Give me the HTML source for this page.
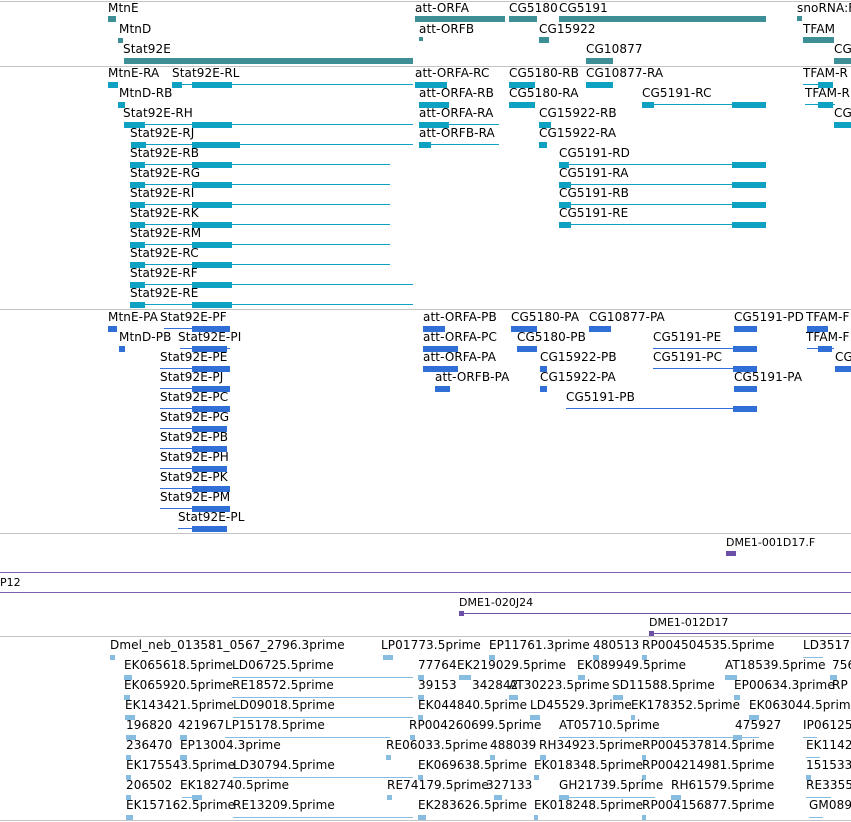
<!DOCTYPE html>
<html><head><meta charset="utf-8"><style>
body{margin:0;width:851px;height:822px;background:#fff;position:relative;overflow:hidden}
div{position:absolute}
.t{font:12px "DejaVu Sans","Liberation Sans",sans-serif;letter-spacing:0.1px;line-height:13px;white-space:nowrap;color:#000}
.h{left:0;width:851px;height:1px;background:#c4c4c4}
.p{left:0;width:851px;height:1px;background:#7a62b0}
.g{background:#3d8f95;height:6px}
.r{background:#0ea1c2;height:6px}
.rl{background:#0ea1c2;height:1px}
.q{background:#2f6fd6;height:6px}
.ql{background:#2f6fd6;height:1px}
.e{background:#86bde0;height:5px}
.el{background:#86bde0;height:1px}
.v{background:#6c4fa6;height:5px}
.vl{background:#6c4fa6;height:1px}
.s{font-size:11px;letter-spacing:0px}
</style></head><body>
<div class="h" style="top:1px"></div>
<div class="h" style="top:66px"></div>
<div class="h" style="top:309px"></div>
<div class="h" style="top:533px"></div>
<div class="p" style="top:572px"></div>
<div class="p" style="top:592px"></div>
<div class="h" style="top:636px"></div>
<div class="h" style="top:820px"></div>

<!-- genes -->
<div class="t" style="left:108px;top:2px">MtnE</div><div class="g" style="left:108px;top:16px;width:8px"></div>
<div class="t" style="left:119px;top:23px">MtnD</div><div class="g" style="left:118px;top:38px;width:5px;height:5px"></div>
<div class="t" style="left:123px;top:43px">Stat92E</div><div class="g" style="left:124px;top:58px;width:289px"></div>
<div class="t" style="left:415px;top:2px">att-ORFA</div><div class="g" style="left:415px;top:16px;width:90px"></div>
<div class="t" style="left:509px;top:2px">CG5180</div><div class="g" style="left:509px;top:16px;width:28px"></div>
<div class="t" style="left:559px;top:2px">CG5191</div><div class="g" style="left:559px;top:16px;width:207px"></div>
<div class="t" style="left:797px;top:2px">snoRNA:F</div><div class="g" style="left:797px;top:16px;width:5px;height:5px"></div>
<div class="t" style="left:419px;top:23px">att-ORFB</div><div class="g" style="left:419px;top:37px;width:4px;height:4px"></div>
<div class="t" style="left:539px;top:23px">CG15922</div><div class="g" style="left:539px;top:37px;width:10px"></div>
<div class="t" style="left:803px;top:23px">TFAM</div><div class="g" style="left:803px;top:37px;width:31px"></div>
<div class="t" style="left:586px;top:43px">CG10877</div><div class="g" style="left:586px;top:58px;width:27px"></div>
<div class="t" style="left:834px;top:43px">CG</div><div class="g" style="left:834px;top:58px;width:17px"></div>

<!-- transcripts -->
<div class="t" style="left:108px;top:67px">MtnE-RA</div><div class="r" style="left:108px;top:82px;width:10px"></div>
<div class="t" style="left:172px;top:67px">Stat92E-RL</div><div class="rl" style="left:172px;top:84px;width:241px"></div><div class="r" style="left:172px;top:82px;width:10px"></div><div class="r" style="left:192px;top:82px;width:40px"></div>
<div class="t" style="left:415px;top:67px">att-ORFA-RC</div><div class="r" style="left:415px;top:82px;width:32px"></div>
<div class="t" style="left:509px;top:67px">CG5180-RB</div><div class="r" style="left:509px;top:82px;width:26px"></div>
<div class="t" style="left:586px;top:67px">CG10877-RA</div><div class="r" style="left:586px;top:82px;width:27px"></div>
<div class="t" style="left:803px;top:67px">TFAM-R</div><div class="rl" style="left:803px;top:84px;width:30px"></div><div class="r" style="left:818px;top:82px;width:15px"></div>

<div class="t" style="left:119px;top:87px">MtnD-RB</div><div class="r" style="left:118px;top:102px;width:7px"></div>
<div class="t" style="left:419px;top:87px">att-ORFA-RB</div><div class="r" style="left:419px;top:102px;width:30px"></div>
<div class="t" style="left:509px;top:87px">CG5180-RA</div><div class="r" style="left:509px;top:102px;width:26px"></div>
<div class="t" style="left:642px;top:87px">CG5191-RC</div><div class="rl" style="left:642px;top:104px;width:124px"></div><div class="r" style="left:642px;top:102px;width:12px"></div><div class="r" style="left:732px;top:102px;width:34px"></div>
<div class="t" style="left:805px;top:87px">TFAM-R</div><div class="rl" style="left:805px;top:104px;width:30px"></div><div class="r" style="left:818px;top:102px;width:15px"></div>

<div class="t" style="left:123px;top:107px">Stat92E-RH</div><div class="rl" style="left:124px;top:124px;width:289px"></div><div class="r" style="left:124px;top:122px;width:21px"></div><div class="r" style="left:192px;top:122px;width:40px"></div>
<div class="t" style="left:419px;top:107px">att-ORFA-RA</div><div class="rl" style="left:419px;top:124px;width:80px"></div><div class="r" style="left:419px;top:122px;width:30px"></div>
<div class="t" style="left:539px;top:107px">CG15922-RB</div><div class="r" style="left:539px;top:122px;width:12px"></div>
<div class="t" style="left:834px;top:107px">CG</div><div class="r" style="left:834px;top:122px;width:17px"></div>

<div class="t" style="left:130px;top:127px">Stat92E-RJ</div><div class="rl" style="left:131px;top:144px;width:282px"></div><div class="r" style="left:131px;top:142px;width:15px"></div><div class="r" style="left:192px;top:142px;width:48px"></div>
<div class="t" style="left:419px;top:127px">att-ORFB-RA</div><div class="rl" style="left:419px;top:144px;width:80px"></div><div class="r" style="left:419px;top:142px;width:12px"></div>
<div class="t" style="left:539px;top:127px">CG15922-RA</div><div class="r" style="left:539px;top:142px;width:8px"></div>

<div class="t" style="left:130px;top:147px">Stat92E-RB</div><div class="rl" style="left:130px;top:164px;width:260px"></div><div class="r" style="left:130px;top:162px;width:15px"></div><div class="r" style="left:192px;top:162px;width:40px"></div>
<div class="t" style="left:559px;top:147px">CG5191-RD</div><div class="rl" style="left:559px;top:164px;width:207px"></div><div class="r" style="left:559px;top:162px;width:10px"></div><div class="r" style="left:732px;top:162px;width:34px"></div>
<div class="t" style="left:130px;top:167px">Stat92E-RG</div><div class="rl" style="left:130px;top:184px;width:260px"></div><div class="r" style="left:130px;top:182px;width:15px"></div><div class="r" style="left:192px;top:182px;width:40px"></div>
<div class="t" style="left:559px;top:167px">CG5191-RA</div><div class="rl" style="left:559px;top:184px;width:207px"></div><div class="r" style="left:559px;top:182px;width:12px"></div><div class="r" style="left:732px;top:182px;width:34px"></div>
<div class="t" style="left:130px;top:187px">Stat92E-RI</div><div class="rl" style="left:130px;top:204px;width:260px"></div><div class="r" style="left:130px;top:202px;width:15px"></div><div class="r" style="left:192px;top:202px;width:40px"></div>
<div class="t" style="left:559px;top:187px">CG5191-RB</div><div class="rl" style="left:559px;top:204px;width:207px"></div><div class="r" style="left:559px;top:202px;width:12px"></div><div class="r" style="left:732px;top:202px;width:34px"></div>
<div class="t" style="left:130px;top:207px">Stat92E-RK</div><div class="rl" style="left:130px;top:224px;width:260px"></div><div class="r" style="left:130px;top:222px;width:15px"></div><div class="r" style="left:192px;top:222px;width:40px"></div>
<div class="t" style="left:559px;top:207px">CG5191-RE</div><div class="rl" style="left:559px;top:224px;width:207px"></div><div class="r" style="left:559px;top:222px;width:12px"></div><div class="r" style="left:732px;top:222px;width:34px"></div>
<div class="t" style="left:130px;top:227px">Stat92E-RM</div><div class="rl" style="left:130px;top:244px;width:260px"></div><div class="r" style="left:130px;top:242px;width:15px"></div><div class="r" style="left:192px;top:242px;width:40px"></div>
<div class="t" style="left:130px;top:247px">Stat92E-RC</div><div class="rl" style="left:130px;top:264px;width:260px"></div><div class="r" style="left:130px;top:262px;width:15px"></div><div class="r" style="left:192px;top:262px;width:40px"></div>
<div class="t" style="left:130px;top:267px">Stat92E-RF</div><div class="rl" style="left:130px;top:284px;width:283px"></div><div class="r" style="left:130px;top:282px;width:15px"></div><div class="r" style="left:192px;top:282px;width:40px"></div>
<div class="t" style="left:130px;top:287px">Stat92E-RE</div><div class="rl" style="left:130px;top:304px;width:283px"></div><div class="r" style="left:130px;top:302px;width:15px"></div><div class="r" style="left:192px;top:302px;width:40px"></div>

<!-- proteins -->
<div class="t" style="left:108px;top:311px">MtnE-PA</div><div class="q" style="left:108px;top:326px;width:9px"></div>
<div class="t" style="left:160px;top:311px">Stat92E-PF</div><div class="ql" style="left:164px;top:328px;width:66px"></div><div class="q" style="left:192px;top:326px;width:38px"></div>
<div class="t" style="left:423px;top:311px">att-ORFA-PB</div><div class="q" style="left:423px;top:326px;width:22px"></div>
<div class="t" style="left:511px;top:311px">CG5180-PA</div><div class="q" style="left:511px;top:326px;width:26px"></div>
<div class="t" style="left:589px;top:311px">CG10877-PA</div><div class="q" style="left:589px;top:326px;width:22px"></div>
<div class="t" style="left:734px;top:311px">CG5191-PD</div><div class="q" style="left:734px;top:326px;width:23px"></div>
<div class="t" style="left:806px;top:311px">TFAM-F</div><div class="q" style="left:807px;top:326px;width:21px"></div>

<div class="t" style="left:119px;top:331px">MtnD-PB</div><div class="q" style="left:119px;top:346px;width:6px"></div>
<div class="t" style="left:178px;top:331px">Stat92E-PI</div><div class="ql" style="left:180px;top:348px;width:50px"></div><div class="q" style="left:192px;top:346px;width:35px"></div>
<div class="t" style="left:423px;top:331px">att-ORFA-PC</div><div class="q" style="left:423px;top:346px;width:35px"></div>
<div class="t" style="left:517px;top:331px">CG5180-PB</div><div class="q" style="left:517px;top:346px;width:20px"></div>
<div class="t" style="left:653px;top:331px">CG5191-PE</div><div class="ql" style="left:653px;top:348px;width:104px"></div><div class="q" style="left:733px;top:346px;width:24px"></div>
<div class="t" style="left:806px;top:331px">TFAM-F</div><div class="ql" style="left:807px;top:348px;width:27px"></div><div class="q" style="left:818px;top:346px;width:14px"></div>

<div class="t" style="left:160px;top:351px">Stat92E-PE</div><div class="ql" style="left:160px;top:368px;width:70px"></div><div class="q" style="left:192px;top:366px;width:38px"></div>
<div class="t" style="left:423px;top:351px">att-ORFA-PA</div><div class="q" style="left:423px;top:366px;width:35px"></div>
<div class="t" style="left:540px;top:351px">CG15922-PB</div><div class="q" style="left:540px;top:366px;width:7px"></div>
<div class="t" style="left:653px;top:351px">CG5191-PC</div><div class="ql" style="left:653px;top:368px;width:104px"></div><div class="q" style="left:733px;top:366px;width:24px"></div>
<div class="t" style="left:835px;top:351px">CG</div><div class="q" style="left:835px;top:366px;width:16px"></div>

<div class="t" style="left:160px;top:371px">Stat92E-PJ</div><div class="ql" style="left:160px;top:388px;width:70px"></div><div class="q" style="left:192px;top:386px;width:38px"></div>
<div class="t" style="left:435px;top:371px">att-ORFB-PA</div><div class="q" style="left:435px;top:386px;width:15px"></div>
<div class="t" style="left:540px;top:371px">CG15922-PA</div><div class="q" style="left:540px;top:386px;width:7px"></div>
<div class="t" style="left:734px;top:371px">CG5191-PA</div><div class="q" style="left:734px;top:386px;width:23px"></div>

<div class="t" style="left:160px;top:391px">Stat92E-PC</div><div class="ql" style="left:160px;top:408px;width:70px"></div><div class="q" style="left:192px;top:406px;width:38px"></div>
<div class="t" style="left:566px;top:391px">CG5191-PB</div><div class="ql" style="left:566px;top:408px;width:191px"></div><div class="q" style="left:733px;top:406px;width:24px"></div>
<div class="t" style="left:160px;top:411px">Stat92E-PG</div><div class="ql" style="left:160px;top:428px;width:67px"></div><div class="q" style="left:192px;top:426px;width:35px"></div>
<div class="t" style="left:160px;top:431px">Stat92E-PB</div><div class="ql" style="left:160px;top:448px;width:67px"></div><div class="q" style="left:192px;top:446px;width:35px"></div>
<div class="t" style="left:160px;top:451px">Stat92E-PH</div><div class="ql" style="left:160px;top:468px;width:67px"></div><div class="q" style="left:192px;top:466px;width:35px"></div>
<div class="t" style="left:160px;top:471px">Stat92E-PK</div><div class="ql" style="left:160px;top:488px;width:70px"></div><div class="q" style="left:192px;top:486px;width:38px"></div>
<div class="t" style="left:160px;top:491px">Stat92E-PM</div><div class="ql" style="left:160px;top:508px;width:70px"></div><div class="q" style="left:192px;top:506px;width:38px"></div>
<div class="t" style="left:178px;top:511px">Stat92E-PL</div><div class="ql" style="left:178px;top:528px;width:49px"></div><div class="q" style="left:192px;top:526px;width:35px"></div>

<!-- purple tracks -->
<div class="t s" style="left:726px;top:536px">DME1-001D17.F</div><div class="v" style="left:726px;top:551px;width:10px"></div>
<div class="t s" style="left:0px;top:576px">P12</div>
<div class="t s" style="left:459px;top:596px">DME1-020J24</div><div class="vl" style="left:459px;top:613px;width:392px"></div><div class="v" style="left:459px;top:611px;width:5px"></div>
<div class="t s" style="left:649px;top:616px">DME1-012D17</div><div class="vl" style="left:649px;top:633px;width:202px"></div><div class="v" style="left:649px;top:631px;width:5px"></div>

<!-- ESTs -->
<div class="t" style="left:110px;top:639px">Dmel_neb_013581_0567_2796.3prime</div><div class="e" style="left:110px;top:655px;width:5px"></div>
<div class="t" style="left:381px;top:639px">LP01773.5prime</div><div class="e" style="left:383px;top:655px;width:10px"></div>
<div class="t" style="left:489px;top:639px">EP11761.3prime</div><div class="e" style="left:489px;top:655px;width:6px"></div>
<div class="t" style="left:593px;top:639px">480513</div><div class="e" style="left:593px;top:655px;width:6px"></div>
<div class="t" style="left:642px;top:639px">RP004504535.5prime</div><div class="e" style="left:642px;top:655px;width:5px"></div>
<div class="t" style="left:803px;top:639px">LD3517</div><div class="el" style="left:803px;top:657px;width:20px"></div>

<div class="t" style="left:124px;top:659px">EK065618.5prime</div><div class="e" style="left:124px;top:675px;width:8px"></div>
<div class="t" style="left:232px;top:659px">LD06725.5prime</div><div class="el" style="left:232px;top:677px;width:181px"></div>
<div class="t" style="left:418px;top:659px">77764</div><div class="e" style="left:418px;top:675px;width:6px"></div>
<div class="t" style="left:457px;top:659px">EK219029.5prime</div><div class="e" style="left:459px;top:675px;width:12px"></div>
<div class="t" style="left:577px;top:659px">EK089949.5prime</div><div class="e" style="left:578px;top:675px;width:7px"></div>
<div class="t" style="left:725px;top:659px">AT18539.5prime</div><div class="e" style="left:725px;top:675px;width:12px"></div>
<div class="t" style="left:832px;top:659px">756</div><div class="e" style="left:830px;top:675px;width:7px"></div>

<div class="t" style="left:124px;top:679px">EK065920.5prime</div><div class="e" style="left:124px;top:695px;width:6px"></div>
<div class="t" style="left:232px;top:679px">RE18572.5prime</div><div class="el" style="left:232px;top:697px;width:181px"></div>
<div class="t" style="left:418px;top:679px">39153</div><div class="e" style="left:418px;top:695px;width:6px"></div>
<div class="t" style="left:472px;top:679px">342842</div>
<div class="t" style="left:509px;top:679px">AT30223.5prime</div><div class="e" style="left:509px;top:695px;width:9px"></div>
<div class="t" style="left:612px;top:679px">SD11588.5prime</div><div class="e" style="left:613px;top:695px;width:10px"></div>
<div class="t" style="left:734px;top:679px">EP00634.3prime</div><div class="e" style="left:734px;top:695px;width:6px"></div>
<div class="t" style="left:832px;top:679px">RP</div>

<div class="t" style="left:125px;top:699px">EK143421.5prime</div><div class="e" style="left:125px;top:715px;width:10px"></div>
<div class="t" style="left:233px;top:699px">LD09018.5prime</div><div class="el" style="left:233px;top:717px;width:180px"></div>
<div class="t" style="left:418px;top:699px">EK044840.5prime</div><div class="e" style="left:418px;top:715px;width:5px"></div>
<div class="t" style="left:530px;top:699px">LD45529.3prime</div><div class="e" style="left:530px;top:715px;width:10px"></div>
<div class="t" style="left:631px;top:699px">EK178352.5prime</div><div class="e" style="left:631px;top:715px;width:4px"></div>
<div class="t" style="left:749px;top:699px">EK063044.5prime</div><div class="e" style="left:749px;top:715px;width:10px"></div>

<div class="t" style="left:126px;top:719px">196820</div><div class="e" style="left:126px;top:735px;width:10px"></div>
<div class="t" style="left:178px;top:719px">421967</div><div class="e" style="left:180px;top:735px;width:7px"></div>
<div class="t" style="left:225px;top:719px">LP15178.5prime</div><div class="el" style="left:225px;top:737px;width:165px"></div>
<div class="t" style="left:409px;top:719px">RP004260699.5prime</div><div class="e" style="left:410px;top:735px;width:5px"></div>
<div class="t" style="left:559px;top:719px">AT05710.5prime</div><div class="el" style="left:559px;top:737px;width:200px"></div>
<div class="t" style="left:735px;top:719px">475927</div><div class="e" style="left:733px;top:735px;width:9px"></div>
<div class="t" style="left:803px;top:719px">IP06125</div><div class="el" style="left:803px;top:737px;width:14px"></div>

<div class="t" style="left:126px;top:739px">236470</div><div class="e" style="left:126px;top:755px;width:5px"></div>
<div class="t" style="left:180px;top:739px">EP13004.3prime</div><div class="e" style="left:180px;top:755px;width:7px"></div>
<div class="t" style="left:386px;top:739px">RE06033.5prime</div><div class="e" style="left:386px;top:755px;width:5px"></div>
<div class="t" style="left:490px;top:739px">488039</div><div class="e" style="left:490px;top:755px;width:5px"></div>
<div class="t" style="left:539px;top:739px">RH34923.5prime</div><div class="e" style="left:540px;top:755px;width:6px"></div>
<div class="t" style="left:642px;top:739px">RP004537814.5prime</div><div class="e" style="left:642px;top:755px;width:4px"></div>
<div class="t" style="left:806px;top:739px">EK1142</div><div class="el" style="left:806px;top:757px;width:14px"></div>

<div class="t" style="left:126px;top:759px">EK175543.5prime</div><div class="e" style="left:126px;top:775px;width:5px"></div>
<div class="t" style="left:233px;top:759px">LD30794.5prime</div><div class="el" style="left:233px;top:777px;width:180px"></div>
<div class="t" style="left:418px;top:759px">EK069638.5prime</div><div class="e" style="left:418px;top:775px;width:5px"></div>
<div class="t" style="left:534px;top:759px">EK018348.5prime</div><div class="e" style="left:534px;top:775px;width:5px"></div>
<div class="t" style="left:642px;top:759px">RP004214981.5prime</div><div class="e" style="left:642px;top:775px;width:4px"></div>
<div class="t" style="left:806px;top:759px">151533</div><div class="e" style="left:806px;top:775px;width:5px"></div>

<div class="t" style="left:126px;top:779px">206502</div><div class="e" style="left:126px;top:795px;width:5px"></div>
<div class="t" style="left:180px;top:779px">EK182740.5prime</div><div class="el" style="left:182px;top:797px;width:20px"></div><div class="e" style="left:192px;top:795px;width:10px"></div>
<div class="t" style="left:387px;top:779px">RE74179.5prime</div><div class="e" style="left:387px;top:795px;width:5px"></div>
<div class="t" style="left:486px;top:779px">327133</div><div class="e" style="left:494px;top:795px;width:8px"></div>
<div class="t" style="left:559px;top:779px">GH21739.5prime</div><div class="el" style="left:559px;top:797px;width:96px"></div><div class="e" style="left:559px;top:795px;width:10px"></div>
<div class="t" style="left:671px;top:779px">RH61579.5prime</div><div class="e" style="left:671px;top:795px;width:10px"></div>
<div class="t" style="left:806px;top:779px">RE3355</div><div class="el" style="left:806px;top:797px;width:25px"></div>

<div class="t" style="left:126px;top:799px">EK157162.5prime</div><div class="e" style="left:126px;top:815px;width:7px"></div>
<div class="t" style="left:233px;top:799px">RE13209.5prime</div><div class="el" style="left:233px;top:817px;width:180px"></div>
<div class="t" style="left:418px;top:799px">EK283626.5prime</div><div class="e" style="left:418px;top:815px;width:8px"></div>
<div class="t" style="left:534px;top:799px">EK018248.5prime</div><div class="e" style="left:534px;top:815px;width:4px"></div>
<div class="t" style="left:642px;top:799px">RP004156877.5prime</div><div class="e" style="left:642px;top:815px;width:4px"></div>
<div class="t" style="left:809px;top:799px">GM089</div><div class="el" style="left:809px;top:817px;width:14px"></div>
</body></html>
